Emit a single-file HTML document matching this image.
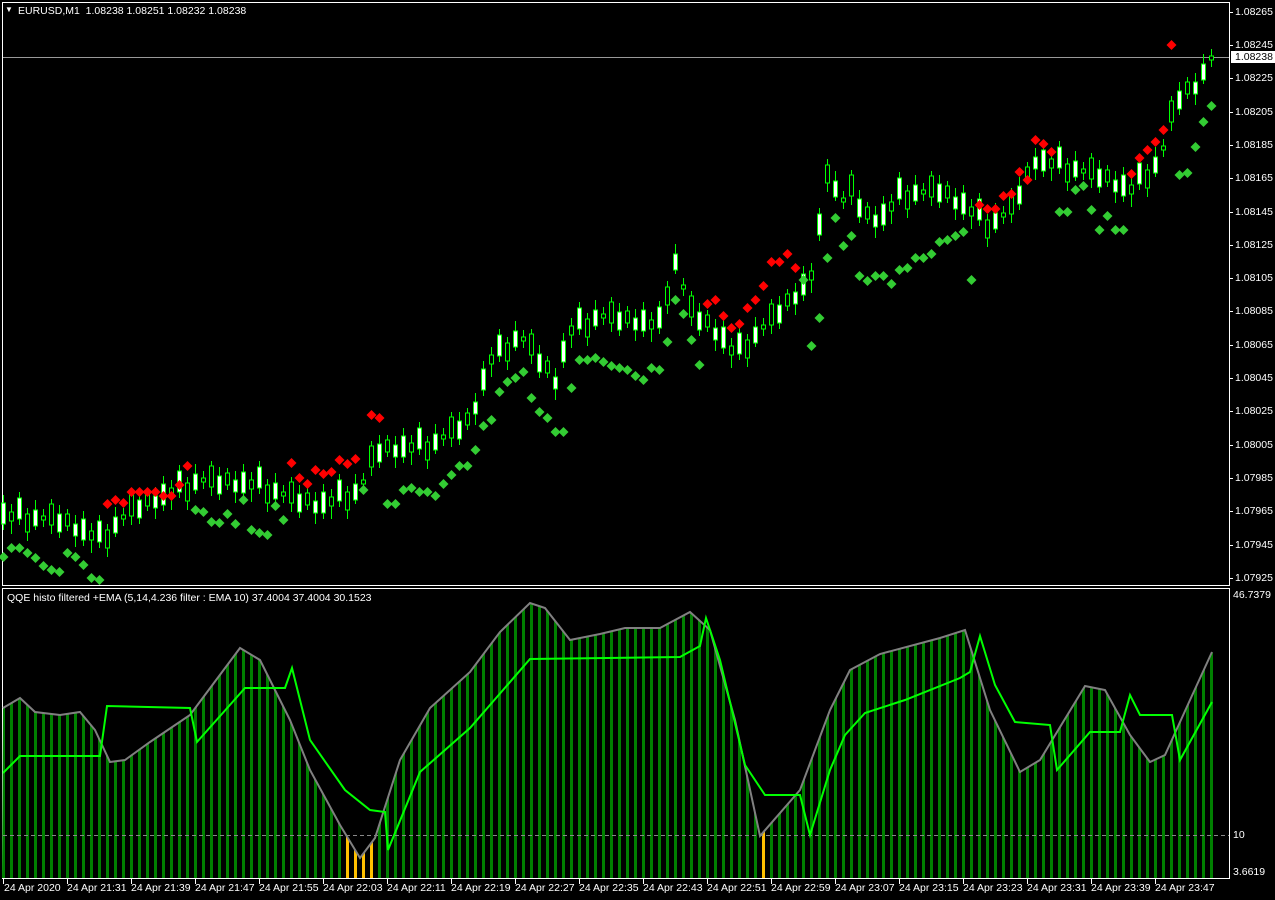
<!DOCTYPE html>
<html><head><meta charset="utf-8"><style>
html,body{margin:0;padding:0;background:#000;width:1275px;height:900px;overflow:hidden;font-family:"Liberation Sans",sans-serif;font-size:11px;color:#fff}
.t{position:absolute;white-space:nowrap;font-size:10.5px;line-height:12px}
svg{position:absolute;left:0;top:0}
</style></head><body>
<svg width="1275" height="900" xmlns="http://www.w3.org/2000/svg" xmlns:xlink="http://www.w3.org/1999/xlink">
<defs>
<pattern id="pg" x="2" y="0" width="8" height="10" patternUnits="userSpaceOnUse"><rect x="0" y="0" width="3" height="10" fill="#008000"/></pattern>
<pattern id="py" x="2" y="0" width="8" height="10" patternUnits="userSpaceOnUse"><rect x="0" y="0" width="3" height="10" fill="#ffc000"/></pattern>
<clipPath id="cy"><rect x="342" y="588" width="31" height="290"/><rect x="759" y="588" width="6" height="290"/></clipPath>
<g id="p0"><line x1="0.5" y1="-20" x2="0.5" y2="15" stroke="#0f0"/><rect x="-1.5" y="-12" width="4" height="21" fill="#fff" stroke="#0f0"/></g>
<g id="p1"><line x1="0.5" y1="-12" x2="0.5" y2="18" stroke="#0f0"/><rect x="-1.5" y="-4" width="4" height="9" fill="#000" stroke="#0f0"/></g>
<g id="p2"><line x1="0.5" y1="-24" x2="0.5" y2="9" stroke="#0f0"/><rect x="-1.5" y="-18" width="4" height="21" fill="#fff" stroke="#0f0"/></g>
<g id="p3"><line x1="0.5" y1="-9" x2="0.5" y2="24" stroke="#0f0"/><rect x="-1.5" y="-3" width="4" height="18" fill="#000" stroke="#0f0"/></g>
<g id="p4"><line x1="0.5" y1="-18" x2="0.5" y2="12" stroke="#0f0"/><rect x="-1.5" y="-8" width="4" height="16" fill="#fff" stroke="#0f0"/></g>
<g id="p5"><line x1="0.5" y1="-9" x2="0.5" y2="9" stroke="#0f0"/><rect x="-1.5" y="-2" width="4" height="4" fill="#000" stroke="#0f0"/></g>
<g id="p6"><line x1="0.5" y1="-20" x2="0.5" y2="15" stroke="#0f0"/><rect x="-1.5" y="-15" width="4" height="21" fill="#000" stroke="#0f0"/></g>
<g id="p7"><line x1="0.5" y1="-15" x2="0.5" y2="18" stroke="#0f0"/><rect x="-1.5" y="-6" width="4" height="18" fill="#fff" stroke="#0f0"/></g>
<g id="p8"><line x1="0.5" y1="-14" x2="0.5" y2="8" stroke="#0f0"/><rect x="-1.5" y="-9" width="4" height="12" fill="#000" stroke="#0f0"/></g>
<g id="p9"><line x1="0.5" y1="-12" x2="0.5" y2="20" stroke="#0f0"/><rect x="-1.5" y="-3" width="4" height="12" fill="#fff" stroke="#0f0"/></g>
<polygon id="G" points="0.5,-5 5.5,0 0.5,5 -4.5,0" fill="#33cc33"/>
<polygon id="R" points="0.5,-5 5.5,0 0.5,5 -4.5,0" fill="#ff0000"/>
</defs>
<rect x="2.5" y="2.5" width="1227" height="583" fill="none" stroke="#fff"/>
<rect x="2.5" y="588.5" width="1227" height="290" fill="none" stroke="#fff"/>

<polygon fill="url(#pg)" points="3,708 20,698 35,712 60,715 80,712 95,730 110,762 125,760 150,742 190,715 240,648 260,660 290,720 310,770 340,825 360,858 375,838 400,760 430,708 470,672 500,632 530,603 545,608 570,640 600,634 625,628 660,628 690,612 710,630 735,720 760,836 800,790 830,710 850,670 880,654 940,638 965,630 990,710 1020,772 1040,760 1085,686 1105,690 1130,735 1150,762 1165,755 1190,700 1213,652 1213,878 2,878"/>
<polygon fill="url(#py)" clip-path="url(#cy)" points="3,708 20,698 35,712 60,715 80,712 95,730 110,762 125,760 150,742 190,715 240,648 260,660 290,720 310,770 340,825 360,858 375,838 400,760 430,708 470,672 500,632 530,603 545,608 570,640 600,634 625,628 660,628 690,612 710,630 735,720 760,836 800,790 830,710 850,670 880,654 940,638 965,630 990,710 1020,772 1040,760 1085,686 1105,690 1130,735 1150,762 1165,755 1190,700 1213,652 1213,878 2,878"/>
<line x1="3" y1="835.5" x2="1229" y2="835.5" stroke="#888" stroke-dasharray="4,3"/>
<polyline fill="none" stroke="#808080" stroke-width="2" points="3,708 20,698 35,712 60,715 80,712 95,730 110,762 125,760 150,742 190,715 240,648 260,660 290,720 310,770 340,825 360,858 375,838 400,760 430,708 470,672 500,632 530,603 545,608 570,640 600,634 625,628 660,628 690,612 710,630 735,720 760,836 800,790 830,710 850,670 880,654 940,638 965,630 990,710 1020,772 1040,760 1085,686 1105,690 1130,735 1150,762 1165,755 1190,700 1212,652"/>
<polyline fill="none" stroke="#00ff00" stroke-width="2" points="3,773 20,756 100,756 107,706 190,708 197,742 245,688 285,688 292,668 310,740 345,790 370,810 385,812 388,850 420,772 470,728 530,659 680,657 700,646 706,618 720,660 745,765 765,795 800,795 810,835 830,770 845,735 865,713 905,700 960,678 970,672 980,636 995,685 1015,722 1050,725 1057,770 1090,732 1120,732 1130,695 1140,715 1172,715 1180,760 1212,702"/>

<line x1="3" y1="57.5" x2="1229" y2="57.5" stroke="#999"/>

<use href="#p0" x="3" y="515"/><use href="#p1" x="11" y="516"/><use href="#p2" x="19" y="516"/><use href="#p3" x="27" y="517"/><use href="#p4" x="35" y="518"/><use href="#p5" x="43" y="518"/><use href="#p6" x="51" y="519"/><use href="#p7" x="59" y="520"/><use href="#p8" x="67" y="523"/><use href="#p9" x="75" y="527"/>
<use href="#p0" x="83" y="531"/><use href="#p1" x="91" y="535"/><use href="#p2" x="99" y="539"/><use href="#p3" x="107" y="533"/><use href="#p4" x="115" y="525"/><use href="#p5" x="123" y="517"/><use href="#p6" x="131" y="510"/><use href="#p7" x="139" y="506"/><use href="#p8" x="147" y="503"/><use href="#p9" x="155" y="499"/>
<use href="#p0" x="163" y="496"/><use href="#p1" x="171" y="492"/><use href="#p2" x="179" y="489"/><use href="#p3" x="187" y="486"/><use href="#p4" x="195" y="482"/><use href="#p5" x="203" y="480"/><use href="#p6" x="211" y="481"/><use href="#p7" x="219" y="482"/><use href="#p8" x="227" y="482"/><use href="#p9" x="235" y="483"/>
<use href="#p0" x="243" y="484"/><use href="#p1" x="251" y="484"/><use href="#p2" x="259" y="485"/><use href="#p3" x="267" y="488"/><use href="#p4" x="275" y="491"/><use href="#p5" x="283" y="494"/><use href="#p6" x="291" y="497"/><use href="#p7" x="299" y="500"/><use href="#p8" x="307" y="502"/><use href="#p9" x="315" y="504"/>
<use href="#p0" x="323" y="504"/><use href="#p1" x="331" y="501"/><use href="#p2" x="339" y="498"/><use href="#p3" x="347" y="495"/><use href="#p4" x="355" y="492"/><use href="#p5" x="363" y="482"/><use href="#p6" x="371" y="461"/><use href="#p7" x="379" y="450"/><use href="#p8" x="387" y="449"/><use href="#p9" x="395" y="448"/>
<use href="#p0" x="403" y="448"/><use href="#p1" x="411" y="447"/><use href="#p2" x="419" y="446"/><use href="#p3" x="427" y="445"/><use href="#p4" x="435" y="442"/><use href="#p5" x="443" y="437"/><use href="#p6" x="451" y="432"/><use href="#p7" x="459" y="427"/><use href="#p8" x="467" y="422"/><use href="#p9" x="475" y="405"/>
<use href="#p0" x="483" y="381"/><use href="#p1" x="491" y="359"/><use href="#p2" x="499" y="353"/><use href="#p3" x="507" y="346"/><use href="#p4" x="515" y="339"/><use href="#p5" x="523" y="339"/><use href="#p6" x="531" y="349"/><use href="#p7" x="539" y="360"/><use href="#p8" x="547" y="370"/><use href="#p9" x="555" y="380"/>
<use href="#p0" x="563" y="353"/><use href="#p1" x="571" y="330"/><use href="#p2" x="579" y="326"/><use href="#p3" x="587" y="322"/><use href="#p4" x="595" y="318"/><use href="#p5" x="603" y="316"/><use href="#p6" x="611" y="317"/><use href="#p7" x="619" y="318"/><use href="#p8" x="627" y="320"/><use href="#p9" x="635" y="321"/>
<use href="#p0" x="643" y="322"/><use href="#p1" x="651" y="324"/><use href="#p2" x="659" y="325"/><use href="#p3" x="667" y="290"/><use href="#p4" x="675" y="262"/><use href="#p5" x="683" y="287"/><use href="#p6" x="691" y="311"/><use href="#p7" x="699" y="318"/><use href="#p8" x="707" y="324"/><use href="#p9" x="715" y="331"/>
<use href="#p0" x="723" y="339"/><use href="#p1" x="731" y="350"/><use href="#p2" x="739" y="351"/><use href="#p3" x="747" y="343"/><use href="#p4" x="755" y="335"/><use href="#p5" x="763" y="327"/><use href="#p6" x="771" y="319"/><use href="#p7" x="779" y="311"/><use href="#p8" x="787" y="303"/><use href="#p9" x="795" y="295"/>
<use href="#p0" x="803" y="286"/><use href="#p1" x="811" y="275"/><use href="#p2" x="819" y="232"/><use href="#p3" x="827" y="168"/><use href="#p4" x="835" y="189"/><use href="#p5" x="843" y="200"/><use href="#p6" x="851" y="190"/><use href="#p7" x="859" y="205"/><use href="#p8" x="867" y="216"/><use href="#p9" x="875" y="218"/>
<use href="#p0" x="883" y="216"/><use href="#p1" x="891" y="206"/><use href="#p2" x="899" y="196"/><use href="#p3" x="907" y="194"/><use href="#p4" x="915" y="193"/><use href="#p5" x="923" y="192"/><use href="#p6" x="931" y="191"/><use href="#p7" x="939" y="190"/><use href="#p8" x="947" y="195"/><use href="#p9" x="955" y="200"/>
<use href="#p0" x="963" y="205"/><use href="#p1" x="971" y="211"/><use href="#p2" x="979" y="217"/><use href="#p3" x="987" y="223"/><use href="#p4" x="995" y="221"/><use href="#p5" x="1003" y="215"/><use href="#p6" x="1011" y="208"/><use href="#p7" x="1019" y="192"/><use href="#p8" x="1027" y="176"/><use href="#p9" x="1035" y="160"/>
<use href="#p0" x="1043" y="162"/><use href="#p1" x="1051" y="163"/><use href="#p2" x="1059" y="165"/><use href="#p3" x="1067" y="167"/><use href="#p4" x="1075" y="169"/><use href="#p5" x="1083" y="171"/><use href="#p6" x="1091" y="173"/><use href="#p7" x="1099" y="175"/><use href="#p8" x="1107" y="179"/><use href="#p9" x="1115" y="183"/>
<use href="#p0" x="1123" y="187"/><use href="#p1" x="1131" y="189"/><use href="#p2" x="1139" y="181"/><use href="#p3" x="1147" y="173"/><use href="#p4" x="1155" y="165"/><use href="#p5" x="1163" y="148"/><use href="#p6" x="1171" y="116"/><use href="#p7" x="1179" y="97"/><use href="#p8" x="1187" y="91"/><use href="#p9" x="1195" y="85"/>
<use href="#p4" x="1203" y="72"/><use href="#p5" x="1211" y="58"/>

<use href="#G" x="3" y="557"/><use href="#G" x="11" y="548"/><use href="#G" x="19" y="548"/><use href="#G" x="27" y="553"/><use href="#G" x="35" y="558"/><use href="#G" x="43" y="566"/><use href="#G" x="51" y="570"/><use href="#G" x="59" y="572"/><use href="#G" x="67" y="553"/><use href="#G" x="75" y="557"/>
<use href="#G" x="83" y="565"/><use href="#G" x="91" y="578"/><use href="#G" x="99" y="580"/>
<use href="#R" x="107" y="504"/><use href="#R" x="115" y="500"/><use href="#R" x="123" y="503"/><use href="#R" x="131" y="492"/><use href="#R" x="139" y="492"/><use href="#R" x="147" y="492"/><use href="#R" x="155" y="492"/><use href="#R" x="163" y="496"/><use href="#R" x="171" y="496"/><use href="#R" x="179" y="485"/><use href="#R" x="187" y="466"/>
<use href="#G" x="195" y="510"/><use href="#G" x="203" y="512"/><use href="#G" x="211" y="522"/><use href="#G" x="219" y="523"/><use href="#G" x="227" y="514"/><use href="#G" x="235" y="524"/><use href="#G" x="243" y="500"/><use href="#G" x="251" y="530"/><use href="#G" x="259" y="533"/><use href="#G" x="267" y="535"/><use href="#G" x="275" y="506"/><use href="#G" x="283" y="520"/>
<use href="#R" x="291" y="463"/><use href="#R" x="299" y="478"/><use href="#R" x="307" y="484"/><use href="#R" x="315" y="470"/><use href="#R" x="323" y="474"/><use href="#R" x="331" y="472"/><use href="#R" x="339" y="460"/><use href="#R" x="347" y="464"/><use href="#R" x="355" y="459"/>
<use href="#G" x="363" y="490"/><use href="#R" x="371" y="415"/><use href="#R" x="379" y="418"/>
<use href="#G" x="387" y="504"/><use href="#G" x="395" y="504"/><use href="#G" x="403" y="490"/><use href="#G" x="411" y="488"/><use href="#G" x="419" y="492"/><use href="#G" x="427" y="492"/><use href="#G" x="435" y="496"/><use href="#G" x="443" y="484"/><use href="#G" x="451" y="475"/><use href="#G" x="459" y="466"/><use href="#G" x="467" y="466"/><use href="#G" x="475" y="450"/>
<use href="#G" x="483" y="426"/><use href="#G" x="491" y="420"/><use href="#G" x="499" y="392"/><use href="#G" x="507" y="382"/><use href="#G" x="515" y="378"/><use href="#G" x="523" y="372"/><use href="#G" x="531" y="398"/><use href="#G" x="539" y="412"/><use href="#G" x="547" y="418"/><use href="#G" x="555" y="432"/><use href="#G" x="563" y="432"/><use href="#G" x="571" y="388"/>
<use href="#G" x="579" y="360"/><use href="#G" x="587" y="360"/><use href="#G" x="595" y="358"/><use href="#G" x="603" y="362"/><use href="#G" x="611" y="366"/><use href="#G" x="619" y="368"/><use href="#G" x="627" y="370"/><use href="#G" x="635" y="376"/><use href="#G" x="643" y="380"/><use href="#G" x="651" y="368"/><use href="#G" x="659" y="370"/><use href="#G" x="667" y="342"/><use href="#G" x="675" y="300"/><use href="#G" x="683" y="314"/><use href="#G" x="691" y="340"/><use href="#G" x="699" y="365"/>
<use href="#R" x="707" y="304"/><use href="#R" x="715" y="300"/><use href="#R" x="723" y="316"/><use href="#R" x="731" y="328"/><use href="#R" x="739" y="324"/><use href="#R" x="747" y="308"/><use href="#R" x="755" y="300"/><use href="#R" x="763" y="286"/><use href="#R" x="771" y="262"/><use href="#R" x="779" y="262"/><use href="#R" x="787" y="254"/><use href="#R" x="795" y="268"/>
<use href="#G" x="803" y="280"/><use href="#G" x="811" y="346"/><use href="#G" x="819" y="318"/><use href="#G" x="827" y="258"/><use href="#G" x="835" y="218"/><use href="#G" x="843" y="246"/><use href="#G" x="851" y="236"/><use href="#G" x="859" y="276"/><use href="#G" x="867" y="281"/><use href="#G" x="875" y="276"/><use href="#G" x="883" y="276"/><use href="#G" x="891" y="284"/><use href="#G" x="899" y="270"/><use href="#G" x="907" y="268"/><use href="#G" x="915" y="258"/><use href="#G" x="923" y="258"/><use href="#G" x="931" y="254"/><use href="#G" x="939" y="242"/><use href="#G" x="947" y="240"/><use href="#G" x="955" y="236"/><use href="#G" x="963" y="232"/><use href="#G" x="971" y="280"/>
<use href="#R" x="979" y="205"/><use href="#R" x="987" y="209"/><use href="#R" x="995" y="209"/><use href="#R" x="1003" y="196"/><use href="#R" x="1011" y="194"/><use href="#R" x="1019" y="172"/><use href="#R" x="1027" y="180"/><use href="#R" x="1035" y="140"/><use href="#R" x="1043" y="144"/><use href="#R" x="1051" y="152"/>
<use href="#G" x="1059" y="212"/><use href="#G" x="1067" y="212"/><use href="#G" x="1075" y="190"/><use href="#G" x="1083" y="186"/><use href="#G" x="1091" y="210"/><use href="#G" x="1099" y="230"/><use href="#G" x="1107" y="216"/><use href="#G" x="1115" y="230"/><use href="#G" x="1123" y="230"/>
<use href="#R" x="1131" y="174"/><use href="#R" x="1139" y="158"/><use href="#R" x="1147" y="150"/><use href="#R" x="1155" y="142"/><use href="#R" x="1163" y="130"/><use href="#R" x="1171" y="45"/>
<use href="#G" x="1179" y="175"/><use href="#G" x="1187" y="173"/><use href="#G" x="1195" y="147"/><use href="#G" x="1203" y="122"/><use href="#G" x="1211" y="106"/>

<g stroke="#fff">
<line x1="3.5" y1="879" x2="3.5" y2="884"/><line x1="67.5" y1="879" x2="67.5" y2="884"/><line x1="131.5" y1="879" x2="131.5" y2="884"/><line x1="195.5" y1="879" x2="195.5" y2="884"/><line x1="259.5" y1="879" x2="259.5" y2="884"/><line x1="323.5" y1="879" x2="323.5" y2="884"/><line x1="387.5" y1="879" x2="387.5" y2="884"/><line x1="451.5" y1="879" x2="451.5" y2="884"/><line x1="515.5" y1="879" x2="515.5" y2="884"/><line x1="579.5" y1="879" x2="579.5" y2="884"/><line x1="643.5" y1="879" x2="643.5" y2="884"/><line x1="707.5" y1="879" x2="707.5" y2="884"/><line x1="771.5" y1="879" x2="771.5" y2="884"/><line x1="835.5" y1="879" x2="835.5" y2="884"/><line x1="899.5" y1="879" x2="899.5" y2="884"/><line x1="963.5" y1="879" x2="963.5" y2="884"/><line x1="1027.5" y1="879" x2="1027.5" y2="884"/><line x1="1091.5" y1="879" x2="1091.5" y2="884"/><line x1="1155.5" y1="879" x2="1155.5" y2="884"/>
<line x1="1229" y1="12.5" x2="1233" y2="12.5"/><line x1="1229" y1="45.5" x2="1233" y2="45.5"/><line x1="1229" y1="78.5" x2="1233" y2="78.5"/><line x1="1229" y1="112.5" x2="1233" y2="112.5"/><line x1="1229" y1="145.5" x2="1233" y2="145.5"/><line x1="1229" y1="178.5" x2="1233" y2="178.5"/><line x1="1229" y1="212.5" x2="1233" y2="212.5"/><line x1="1229" y1="245.5" x2="1233" y2="245.5"/><line x1="1229" y1="278.5" x2="1233" y2="278.5"/><line x1="1229" y1="311.5" x2="1233" y2="311.5"/><line x1="1229" y1="345.5" x2="1233" y2="345.5"/><line x1="1229" y1="378.5" x2="1233" y2="378.5"/><line x1="1229" y1="411.5" x2="1233" y2="411.5"/><line x1="1229" y1="445.5" x2="1233" y2="445.5"/><line x1="1229" y1="478.5" x2="1233" y2="478.5"/><line x1="1229" y1="511.5" x2="1233" y2="511.5"/><line x1="1229" y1="545.5" x2="1233" y2="545.5"/><line x1="1229" y1="578.5" x2="1233" y2="578.5"/>
</g>
</svg>
<div class="t" style="left:18px;top:5px">EURUSD,M1&nbsp; 1.08238 1.08251 1.08232 1.08238</div>
<div class="t" style="left:5px;top:4px;font-size:8px">▼</div>
<div class="t" style="left:7px;top:592px">QQE histo filtered +EMA (5,14,4.236 filter : EMA 10) 37.4004 37.4004 30.1523</div>
<div class="t" style="left:1235px;top:6px">1.08265</div>
<div class="t" style="left:1235px;top:39px">1.08245</div>
<div class="t" style="left:1231px;top:51px;background:#fff;color:#000;padding:0 4px">1.08238</div>
<div class="t" style="left:1235px;top:72px">1.08225</div>
<div class="t" style="left:1235px;top:106px">1.08205</div>
<div class="t" style="left:1235px;top:139px">1.08185</div>
<div class="t" style="left:1235px;top:172px">1.08165</div>
<div class="t" style="left:1235px;top:206px">1.08145</div>
<div class="t" style="left:1235px;top:239px">1.08125</div>
<div class="t" style="left:1235px;top:272px">1.08105</div>
<div class="t" style="left:1235px;top:305px">1.08085</div>
<div class="t" style="left:1235px;top:339px">1.08065</div>
<div class="t" style="left:1235px;top:372px">1.08045</div>
<div class="t" style="left:1235px;top:405px">1.08025</div>
<div class="t" style="left:1235px;top:439px">1.08005</div>
<div class="t" style="left:1235px;top:472px">1.07985</div>
<div class="t" style="left:1235px;top:505px">1.07965</div>
<div class="t" style="left:1235px;top:539px">1.07945</div>
<div class="t" style="left:1235px;top:572px">1.07925</div>
<div class="t" style="left:1233px;top:589px">46.7379</div>
<div class="t" style="left:1233px;top:829px">10</div>
<div class="t" style="left:1233px;top:866px">3.6619</div>
<div class="t" style="left:4px;top:882px">24 Apr 2020</div>
<div class="t" style="left:67px;top:882px">24 Apr 21:31</div>
<div class="t" style="left:131px;top:882px">24 Apr 21:39</div>
<div class="t" style="left:195px;top:882px">24 Apr 21:47</div>
<div class="t" style="left:259px;top:882px">24 Apr 21:55</div>
<div class="t" style="left:323px;top:882px">24 Apr 22:03</div>
<div class="t" style="left:387px;top:882px">24 Apr 22:11</div>
<div class="t" style="left:451px;top:882px">24 Apr 22:19</div>
<div class="t" style="left:515px;top:882px">24 Apr 22:27</div>
<div class="t" style="left:579px;top:882px">24 Apr 22:35</div>
<div class="t" style="left:643px;top:882px">24 Apr 22:43</div>
<div class="t" style="left:707px;top:882px">24 Apr 22:51</div>
<div class="t" style="left:771px;top:882px">24 Apr 22:59</div>
<div class="t" style="left:835px;top:882px">24 Apr 23:07</div>
<div class="t" style="left:899px;top:882px">24 Apr 23:15</div>
<div class="t" style="left:963px;top:882px">24 Apr 23:23</div>
<div class="t" style="left:1027px;top:882px">24 Apr 23:31</div>
<div class="t" style="left:1091px;top:882px">24 Apr 23:39</div>
<div class="t" style="left:1155px;top:882px">24 Apr 23:47</div>
</body></html>
